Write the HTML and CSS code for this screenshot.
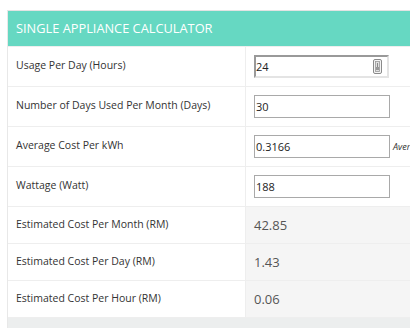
FILE: index.html
```html
<!DOCTYPE html>
<html>
<head>
<meta charset="utf-8">
<link rel="stylesheet" href="styles.css">
</head>
<body>
<div class="page">
  <div class="calc">
    <div class="head">SINGLE APPLIANCE CALCULATOR</div>
    <div class="row">
      <div class="label">Usage Per Day (Hours)</div>
      <div class="cell">
        <div class="num">
          <span class="num-val">24</span>
          <svg class="spin" width="9" height="15" viewBox="0 0 9 15"><rect x="0.5" y="0.5" width="8" height="14" rx="1.5" fill="#f4f4f4" stroke="#8a8a8a"/><rect x="2.5" y="2.5" width="4" height="10" fill="#e0e0e0" stroke="#9a9a9a" stroke-width="0.8"/><rect x="4" y="4" width="1" height="4" fill="#888"/><rect x="3" y="8" width="3" height="3" fill="#999"/></svg>
        </div>
      </div>
    </div>
    <div class="row">
      <div class="label">Number of Days Used Per Month (Days)</div>
      <div class="cell"><div class="box">30</div></div>
    </div>
    <div class="row">
      <div class="label">Average Cost Per kWh</div>
      <div class="cell"><div class="box">0.3166</div><span class="note">Aver</span></div>
    </div>
    <div class="row">
      <div class="label">Wattage (Watt)</div>
      <div class="cell"><div class="box">188</div></div>
    </div>
    <div class="row res">
      <div class="label">Estimated Cost Per Month (RM)</div>
      <div class="cell val">42.85</div>
    </div>
    <div class="row res">
      <div class="label">Estimated Cost Per Day (RM)</div>
      <div class="cell val">1.43</div>
    </div>
    <div class="row res">
      <div class="label">Estimated Cost Per Hour (RM)</div>
      <div class="cell val">0.06</div>
    </div>
    <div class="foot"></div>
  </div>
</div>
</body>
</html>
```
FILE: styles.css
```css
html, body {
  margin: 0;
  padding: 0;
  background: #fff;
  overflow: hidden;
}
.page {
  padding: 10px 0 0 7px;
  width: 600px;
}
.calc {
  border-top: 1px solid #e3e3e3;
  border-left: 1px solid #e8e8e8;
  font-family: "Open Sans", "Noto Sans", sans-serif;
  color: #333;
  width: 520px;
}
.head {
  background: #66d8c2;
  color: #fff;
  font-size: 12.8px;
  height: 35px;
  line-height: 35px;
  padding-left: 8px;
  border-bottom: 1px solid #eee;
}
.row {
  display: flex;
  height: 39px;
  border-bottom: 1px solid #eee;
}
.row.res {
  height: 36px;
}
.label {
  width: 238px;
  padding-left: 8px;
  padding-bottom: 3px;
  border-right: 1px solid #eee;
  font-size: 10.5px;
  display: flex;
  align-items: center;
  box-sizing: border-box;
}
.cell {
  flex: 1;
  display: flex;
  align-items: center;
  padding-left: 8px;
}
.box {
  width: 133px;
  height: 21px;
  border: 1px solid #a9a9a9;
  font-size: 11px;
  line-height: 21px;
  padding-left: 1px;
  box-sizing: content-box;
  color: #222;
}
.num {
  width: 126px;
  height: 19px;
  border: 2px solid #e4e4e4;
  border-top-color: #999;
  border-left-color: #999;
  display: flex;
  align-items: center;
  justify-content: space-between;
  font-size: 11px;
  color: #222;
  padding-right: 5px;
  box-sizing: content-box;
}
.spin {
  display: block;
}
.note {
  font-size: 9px;
  font-style: italic;
  margin-left: 3px;
  color: #333;
  white-space: nowrap;
}
.val {
  background: #f5f5f5;
  font-size: 13px;
  color: #555;
}
.foot {
  height: 20px;
  background: #eceeee;
}
```
